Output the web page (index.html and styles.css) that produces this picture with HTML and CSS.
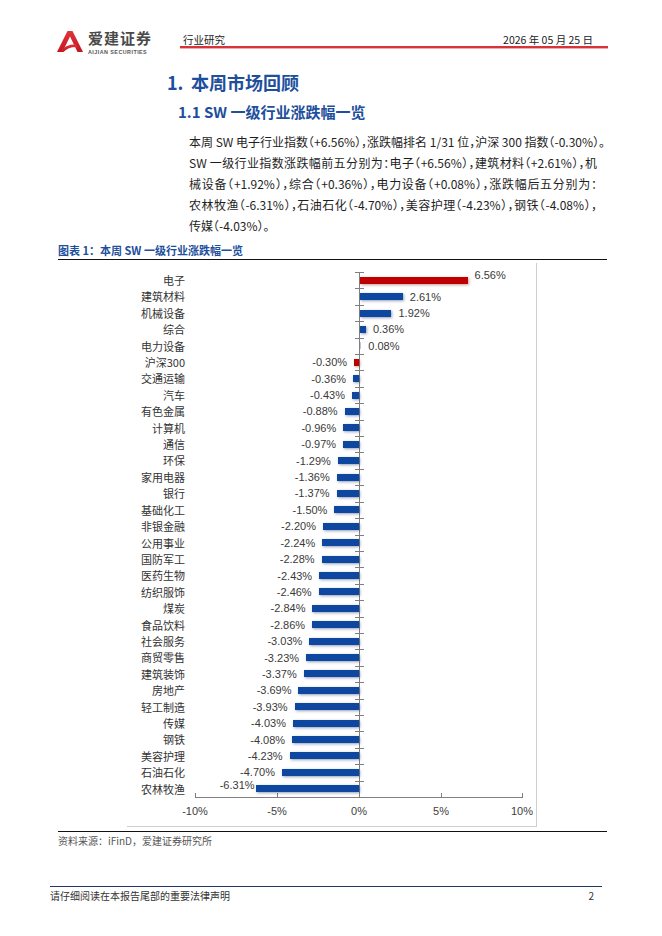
FILE: index.html
```html
<!DOCTYPE html>
<html lang="zh-CN">
<head>
<meta charset="utf-8">
<title>行业研究</title>
<link rel="stylesheet" href="styles.css">
</head>
<body>
<div class="page">
  <header class="header">
    <div class="logo">
      <svg class="logo-mark" viewBox="0 0 26 21" width="26" height="21">
        <defs>
          <linearGradient id="lg" x1="0" y1="0" x2="0" y2="1">
            <stop offset="0" stop-color="#e0353b"/>
            <stop offset="1" stop-color="#c4161f"/>
          </linearGradient>
        </defs>
        <path d="M0 21 L10.5 0 L15.5 0 L26 21 L20.5 21 L13 5.5 L5.5 21 Z" fill="url(#lg)"/>
        <path d="M2.5 21 Q8.5 13 19 13.2 L20.3 15.9 Q11 15.6 6.5 21 Z" fill="url(#lg)"/>
      </svg>
      <div class="logo-text">
        <div class="logo-cn">爱建证券</div>
        <div class="logo-en">AIJIAN SECURITIES</div>
      </div>
    </div>
    <div class="header-bar">
      <span>行业研究</span>
      <span>2026 年 05 月 25 日</span>
    </div>
  </header>

  <h1 class="h1"><span class="num">1.</span>本周市场回顾</h1>
  <h2 class="h2">1.1 SW 一级行业涨跌幅一览</h2>

  <div class="para">
    <div class="line">本周 SW 电子行业指数（+6.56%），涨跌幅排名 1/31 位，沪深 300 指数（-0.30%）。</div>
    <div class="line">SW 一级行业指数涨跌幅前五分别为：电子（+6.56%），建筑材料（+2.61%），机</div>
    <div class="line">械设备（+1.92%），综合（+0.36%），电力设备（+0.08%），涨跌幅后五分别为：</div>
    <div class="line">农林牧渔（-6.31%），石油石化（-4.70%），美容护理（-4.23%），钢铁（-4.08%），</div>
    <div class="line last">传媒（-4.03%）。</div>
  </div>

  <section class="figure">
    <div class="fig-title">图表 1：本周 SW 一级行业涨跌幅一览</div>
    <div class="chart-box">
      <div class="rows">
        <div class="row pos" style="--v:6.56"><span class="cat">电子</span><div class="plot"><i class="bar red"></i><span class="val lift-s">6.56%</span></div></div>
        <div class="row pos" style="--v:2.61"><span class="cat">建筑材料</span><div class="plot"><i class="bar"></i><span class="val">2.61%</span></div></div>
        <div class="row pos" style="--v:1.92"><span class="cat">机械设备</span><div class="plot"><i class="bar"></i><span class="val">1.92%</span></div></div>
        <div class="row pos" style="--v:0.36"><span class="cat">综合</span><div class="plot"><i class="bar"></i><span class="val">0.36%</span></div></div>
        <div class="row pos" style="--v:0.08"><span class="cat">电力设备</span><div class="plot"><i class="bar faint"></i><span class="val">0.08%</span></div></div>
        <div class="row neg" style="--v:-0.30"><span class="cat">沪深300</span><div class="plot"><i class="bar red"></i><span class="val">-0.30%</span></div></div>
        <div class="row neg" style="--v:-0.36"><span class="cat">交通运输</span><div class="plot"><i class="bar"></i><span class="val">-0.36%</span></div></div>
        <div class="row neg" style="--v:-0.43"><span class="cat">汽车</span><div class="plot"><i class="bar"></i><span class="val">-0.43%</span></div></div>
        <div class="row neg" style="--v:-0.88"><span class="cat">有色金属</span><div class="plot"><i class="bar"></i><span class="val">-0.88%</span></div></div>
        <div class="row neg" style="--v:-0.96"><span class="cat">计算机</span><div class="plot"><i class="bar"></i><span class="val">-0.96%</span></div></div>
        <div class="row neg" style="--v:-0.97"><span class="cat">通信</span><div class="plot"><i class="bar"></i><span class="val">-0.97%</span></div></div>
        <div class="row neg" style="--v:-1.29"><span class="cat">环保</span><div class="plot"><i class="bar"></i><span class="val">-1.29%</span></div></div>
        <div class="row neg" style="--v:-1.36"><span class="cat">家用电器</span><div class="plot"><i class="bar"></i><span class="val">-1.36%</span></div></div>
        <div class="row neg" style="--v:-1.37"><span class="cat">银行</span><div class="plot"><i class="bar"></i><span class="val">-1.37%</span></div></div>
        <div class="row neg" style="--v:-1.50"><span class="cat">基础化工</span><div class="plot"><i class="bar"></i><span class="val">-1.50%</span></div></div>
        <div class="row neg" style="--v:-2.20"><span class="cat">非银金融</span><div class="plot"><i class="bar"></i><span class="val">-2.20%</span></div></div>
        <div class="row neg" style="--v:-2.24"><span class="cat">公用事业</span><div class="plot"><i class="bar"></i><span class="val">-2.24%</span></div></div>
        <div class="row neg" style="--v:-2.28"><span class="cat">国防军工</span><div class="plot"><i class="bar"></i><span class="val">-2.28%</span></div></div>
        <div class="row neg" style="--v:-2.43"><span class="cat">医药生物</span><div class="plot"><i class="bar"></i><span class="val">-2.43%</span></div></div>
        <div class="row neg" style="--v:-2.46"><span class="cat">纺织服饰</span><div class="plot"><i class="bar"></i><span class="val">-2.46%</span></div></div>
        <div class="row neg" style="--v:-2.84"><span class="cat">煤炭</span><div class="plot"><i class="bar"></i><span class="val">-2.84%</span></div></div>
        <div class="row neg" style="--v:-2.86"><span class="cat">食品饮料</span><div class="plot"><i class="bar"></i><span class="val">-2.86%</span></div></div>
        <div class="row neg" style="--v:-3.03"><span class="cat">社会服务</span><div class="plot"><i class="bar"></i><span class="val">-3.03%</span></div></div>
        <div class="row neg" style="--v:-3.23"><span class="cat">商贸零售</span><div class="plot"><i class="bar"></i><span class="val">-3.23%</span></div></div>
        <div class="row neg" style="--v:-3.37"><span class="cat">建筑装饰</span><div class="plot"><i class="bar"></i><span class="val">-3.37%</span></div></div>
        <div class="row neg" style="--v:-3.69"><span class="cat">房地产</span><div class="plot"><i class="bar"></i><span class="val">-3.69%</span></div></div>
        <div class="row neg" style="--v:-3.93"><span class="cat">轻工制造</span><div class="plot"><i class="bar"></i><span class="val">-3.93%</span></div></div>
        <div class="row neg" style="--v:-4.03"><span class="cat">传媒</span><div class="plot"><i class="bar"></i><span class="val">-4.03%</span></div></div>
        <div class="row neg" style="--v:-4.08"><span class="cat">钢铁</span><div class="plot"><i class="bar"></i><span class="val">-4.08%</span></div></div>
        <div class="row neg" style="--v:-4.23"><span class="cat">美容护理</span><div class="plot"><i class="bar"></i><span class="val">-4.23%</span></div></div>
        <div class="row neg" style="--v:-4.70"><span class="cat">石油石化</span><div class="plot"><i class="bar"></i><span class="val">-4.70%</span></div></div>
        <div class="row neg" style="--v:-6.31"><span class="cat">农林牧渔</span><div class="plot"><i class="bar"></i><span class="val lift-l">-6.31%</span></div></div>
      </div>
      <div class="xaxis">
        <i class="xt p0"></i><i class="xt p25"></i><i class="xt p75"></i><i class="xt p100"></i>
        <span class="xl p0">-10%</span>
        <span class="xl p25">-5%</span>
        <span class="xl p50">0%</span>
        <span class="xl p75">5%</span>
        <span class="xl p100">10%</span>
      </div>
    </div>
  </section>

  <div class="source">资料来源：iFinD，爱建证券研究所</div>

  <footer class="footer">
    <span>请仔细阅读在本报告尾部的重要法律声明</span>
    <span class="pageno">2</span>
  </footer>
</div>
</body>
</html>
```

FILE: styles.css
```css
* { box-sizing: border-box; }

html, body {
  margin: 0;
  padding: 0;
  background: #ffffff;
}

body {
  font-family: "Noto Sans CJK SC", "Noto Sans", sans-serif;
  color: #222;
  width: 662px;
  height: 936px;
  overflow: hidden;
}

.page {
  width: 662px;
}

/* ---------- header ---------- */
.header {
  display: flex;
  align-items: flex-start;
  padding: 30px 0 0 57px;
  height: 52px;
}

.logo {
  display: flex;
  align-items: flex-start;
  width: 96px;
  height: 22px;
}

.logo-mark {
  display: block;
  margin-top: 1px;
  flex: none;
}

.logo-text {
  margin-left: 5px;
  display: flex;
  flex-direction: column;
}

.logo-cn {
  font-size: 15px;
  line-height: 15px;
  font-weight: 700;
  color: #4a4a4a;
  letter-spacing: 1px;
  white-space: nowrap;
}

.logo-en {
  margin-top: 3.5px;
  font-family: "Liberation Sans", sans-serif;
  font-size: 5.4px;
  line-height: 6px;
  font-weight: 700;
  color: #555;
  letter-spacing: 0.45px;
  white-space: nowrap;
}

.header-bar {
  margin-left: 27px;
  width: 428px;
  height: 18px;
  display: flex;
  justify-content: space-between;
  align-items: flex-start;
  padding: 3px 15px 0 3px;
  font-size: 10.5px;
  line-height: 13px;
  color: #222;
  border-bottom: 2px solid #d6333b;
  box-shadow: 0 1px 0 #f2a9ab;
}

/* ---------- headings ---------- */
.h1 {
  margin: 18px 0 0 167px;
  font-size: 18px;
  line-height: 24px;
  font-weight: 700;
  color: #1d4f9c;
}

.h1 .num {
  display: inline-block;
  width: 24px;
}

.h2 {
  margin: 8px 0 0 178px;
  font-size: 15px;
  line-height: 20px;
  font-weight: 700;
  color: #1d4f9c;
}

/* ---------- paragraph ---------- */
.para {
  margin: 8.5px 0 0 189px;
  width: 408px;
  font-size: 12px;
  line-height: 21px;
  color: #1e1e1e;
  font-feature-settings: "halt";
}

.para .line {
  white-space: nowrap;
  text-align: justify;
  text-align-last: justify;
}

.para .line.last {
  text-align-last: left;
}

/* ---------- figure ---------- */
.figure {
  margin: 6.5px 0 0 58px;
  width: 549px;
  padding-bottom: 4px;
  border-bottom: 1px solid #111;
}

.fig-title {
  font-size: 11px;
  line-height: 16px;
  padding-bottom: 1px;
  font-weight: 700;
  color: #1d4f9c;
  border-bottom: 1px solid #111;
}

.chart-box {
  margin: 3px 0 0 69px;
  width: 410px;
  padding: 9px 13px 0 0;
  border-right: 1px solid #cfcfcf;
  border-bottom: 1px solid #cfcfcf;
}

.rows {
  display: flex;
  flex-direction: column;
}

.row {
  display: grid;
  grid-template-columns: 68px 328px;
  height: 16.42px;
}

.cat {
  text-align: right;
  padding-right: 10px;
  font-size: 11px;
  line-height: 16.42px;
  color: #333;
  white-space: nowrap;
}

.plot {
  position: relative;
}

/* category tick marks crossing the vertical axis */
.plot::before {
  content: "";
  position: absolute;
  top: 0;
  left: 160px;
  width: 9px;
  height: 1px;
  background: #7f7f7f;
}

/* vertical axis */
.plot::after {
  content: "";
  position: absolute;
  top: 0;
  bottom: 0;
  left: 164px;
  width: 1px;
  background: #7f7f7f;
}

.bar {
  position: absolute;
  top: 50%;
  height: 7px;
  margin-top: -3.5px;
  background: #0e47a0;
  box-shadow: 1px 1px 3px rgba(20, 40, 90, 0.45);
  z-index: 1;
}

.bar.red {
  background: #c00000;
  box-shadow: 1px 1px 3px rgba(90, 20, 20, 0.4);
}

.bar.faint {
  background: #b9c6dc;
  box-shadow: none;
}

.pos .bar {
  left: 165px;
  width: calc(var(--v) * 16.4px);
}

.neg .bar {
  right: 164px;
  width: calc(var(--v) * -16.4px);
}

.val {
  position: absolute;
  top: 50%;
  transform: translateY(-50%);
  font-family: "Liberation Sans", "Noto Sans", sans-serif;
  font-size: 11px;
  line-height: 10px;
  color: #3a3a3a;
  white-space: nowrap;
}

.pos .val {
  left: calc(165px + var(--v) * 16.4px + 7px);
}

.neg .val {
  right: calc(164px - var(--v) * 16.4px + 7px);
}

.val.lift-s {
  margin-top: -5px;
}

.val.lift-l {
  margin-top: -4px;
  margin-right: -6px;
}

/* x axis */
.xaxis {
  position: relative;
  margin-left: 68px;
  width: 328px;
  height: 29px;
  border-top: 1px solid #7f7f7f;
}

.xt {
  position: absolute;
  top: -5px;
  width: 1px;
  height: 4px;
  background: #7f7f7f;
}

.xl {
  position: absolute;
  top: 6px;
  transform: translateX(-50%);
  font-family: "Liberation Sans", "Noto Sans", sans-serif;
  font-size: 11px;
  line-height: 14px;
  color: #404040;
  white-space: nowrap;
}

.p0 { left: 0; }
.p25 { left: 82px; }
.p50 { left: 164px; }
.p75 { left: 246px; }
.p100 { left: 327px; }

/* ---------- source & footer ---------- */
.source {
  margin: 2px 0 0 58px;
  font-size: 10px;
  line-height: 14px;
  color: #555;
}

.footer {
  margin: 38px 60px 0 50px;
  border-top: 1px solid #1f3864;
  display: flex;
  justify-content: space-between;
  padding: 2px 8px 0 0;
  font-size: 10px;
  line-height: 14px;
  color: #333;
}
```
